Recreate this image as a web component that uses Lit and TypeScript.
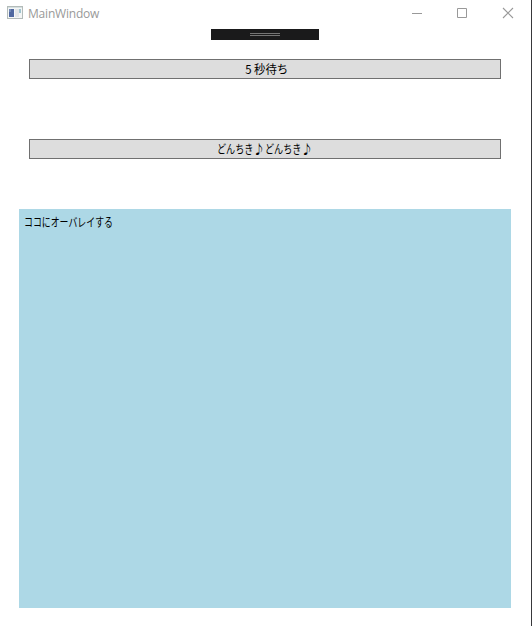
import { LitElement, html, css } from "lit";
import { customElement } from "lit/decorators.js";

@customElement("app-root")
export class AppRoot extends LitElement {
  static styles = css`
    :host {
      display: block;
      box-sizing: border-box;
      width: 532px;
      height: 626px;
      overflow: hidden;
      background: #fff;
      border-right: 1px solid #38383b;
      font: 12px/16px "Noto Sans CJK JP", sans-serif;
      color: #000;
    }
    .titlebar {
      display: flex;
      align-items: center;
      height: 29px;
      padding: 0 0 3px 7px;
      box-sizing: border-box;
    }
    .icon { display: block; width: 16px; height: 14px; }
    .title {
      flex: 1;
      margin-left: 5px;
      font: 12px/16px "Open Sans", "Noto Sans", sans-serif;
      letter-spacing: -0.2px;
      padding-top: 1px;
      color: #999;
    }
    .controls { display: flex; margin-right: -1px; }
    .controls svg { display: block; width: 46px; height: 26px; }
    .handle {
      box-sizing: border-box;
      width: 108px;
      height: 11px;
      margin: 0 auto 0 211px;
      padding-top: 4px;
      background: #1a1a1b;
    }
    .grip {
      box-sizing: border-box;
      width: 30px;
      height: 3px;
      margin: 0 auto;
      border: solid #747474;
      border-width: 1px 0;
    }
    .button {
      display: flex;
      align-items: center;
      justify-content: center;
      box-sizing: border-box;
      width: 472px;
      height: 20px;
      margin: 19px 0 0 29px;
      padding: 0;
      border: 1px solid #707070;
      background: #ddd;
      color: inherit;
      font: inherit;
    }
    .button + .button { margin-top: 60px; }
    .label { display: block; white-space: pre; }
    .wait { margin-left: 3px; transform: scaleX(0.95); }
    .kana { width: 36px; white-space: nowrap; transform: scaleX(0.76); transform-origin: 0 0; }
    .note { width: 12px; text-align: center; }
    .panel {
      box-sizing: border-box;
      width: 492px;
      height: 399px;
      margin: 50px 0 0 19px;
      padding: 5px;
      background: #add8e6;
    }
    .overlay { transform: scaleX(0.742); transform-origin: 0 0; }
  `;

  render() {
    return html`
      <div class="titlebar">
        <svg class="icon" viewBox="0 0 16 14" shape-rendering="crispEdges">
          <rect x="0.5" y="0.5" width="15" height="12" fill="#f4f6f6" stroke="#b3bbb9" />
          <rect x="1" y="1" width="14" height="1" fill="#d5dfe0" />
          <rect x="2" y="3" width="5" height="8" fill="#5068a0" />
          <rect x="2" y="3" width="2" height="3" fill="#7189b5" />
          <rect x="8" y="3" width="4" height="8" fill="#e3e6e8" />
          <rect x="12" y="3" width="2" height="4" fill="#9fc4cf" />
        </svg>
        <span class="title">MainWindow</span>
        <div class="controls">
          <svg viewBox="0 0 46 26"><path d="M18 13.5h10" stroke="#999" /></svg>
          <svg viewBox="0 0 46 26"><path d="M17.5 8.5h9v9h-9z" fill="none" stroke="#999" /></svg>
          <svg viewBox="0 0 46 26"><path d="M17 8l10 10M27 8l-10 10" stroke="#999" stroke-width="1.1" /></svg>
        </div>
      </div>
      <div class="handle"><div class="grip"></div></div>
      <button class="button"><span class="label wait">5 秒待ち</span></button>
      <button class="button">
        <span class="kana">どんちき</span><span class="note">♪</span
        ><span class="kana">どんちき</span><span class="note">♪</span>
      </button>
      <div class="panel"><span class="label overlay">ココにオーバレイする</span></div>
    `;
  }
}
